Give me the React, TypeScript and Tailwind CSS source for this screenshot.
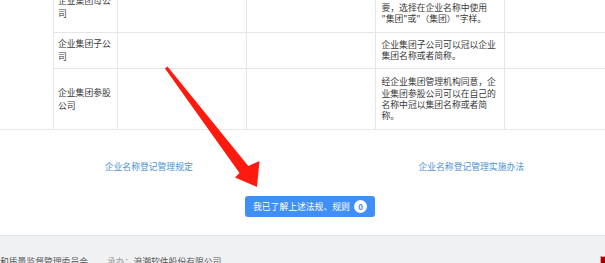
import React from "react";

const cell = "border border-[#e6e6e6] align-middle p-0";

export default function App() {
  return (
    <div className="relative w-[605px] h-[263px] overflow-hidden bg-white" style={{ fontFamily: '"Noto Sans CJK SC", "Noto Sans", sans-serif' }}>
      <div className="w-[645px] -ml-[12.5px] -mt-[18px]">
        <table className="table-fixed border-collapse w-[645px] text-[8.8px] text-[#3a3a3a]">
          <colgroup>
            <col className="w-[65px]" />
            <col className="w-[64px]" />
            <col className="w-[129px]" />
            <col className="w-[129px]" />
            <col className="w-[129px]" />
            <col className="w-[129px]" />
          </colgroup>
          <tbody>
            <tr className="h-[49.5px]">
              <td rowSpan={3} className={cell}></td>
              <td className={cell}>
                <div className="px-[4.5px] leading-[13px] whitespace-nowrap">企业集团母公<br />司</div>
              </td>
              <td className={cell}></td>
              <td className={cell}></td>
              <td className={cell}>
                <div className="px-[6px] leading-[11.5px] whitespace-nowrap">企业集团的母公司可以根据需<br />要，选择在企业名称中使用<br />"集团"或"（集团）"字样。</div>
              </td>
              <td className={cell}></td>
            </tr>
            <tr className="h-[36.5px]">
              <td className={cell}>
                <div className="px-[4.5px] leading-[13px] whitespace-nowrap">企业集团子公<br />司</div>
              </td>
              <td className={cell}></td>
              <td className={cell}></td>
              <td className={cell}>
                <div className="px-[6px] leading-[11.6px] whitespace-nowrap">企业集团子公司可以冠以企业<br />集团名称或者简称。</div>
              </td>
              <td className={cell}></td>
            </tr>
            <tr className="h-[61px]">
              <td className={cell}>
                <div className="px-[4.5px] leading-[13.3px] whitespace-nowrap">企业集团参股<br />公司</div>
              </td>
              <td className={cell}></td>
              <td className={cell}></td>
              <td className={cell}>
                <div className="px-[6px] leading-[11.4px] whitespace-nowrap">经企业集团管理机构同意，企<br />业集团参股公司可以在自己的<br />名称中冠以集团名称或者简<br />称。</div>
              </td>
              <td className={cell}></td>
            </tr>
          </tbody>
        </table>

        <div className="grid grid-cols-2 mt-[31px] text-[8.8px] leading-[12px] text-[#4b92d4]">
          <div className="text-center">企业名称登记管理规定</div>
          <div className="text-center">企业名称登记管理实施办法</div>
        </div>

        <div className="flex justify-center mt-[23px]">
          <button className="h-[21px] w-[130px] flex items-center pl-[8px] pr-[8px] rounded-[3px] bg-[#3f8ff7] text-white text-[8.8px] leading-[12px]">
            <span className="whitespace-nowrap">我已了解上述法规、规则</span>
            <span className="ml-auto w-[13px] h-[13px] rounded-full bg-white text-[#3f8ff7] text-[8px] font-bold flex items-center justify-center leading-none">0</span>
          </button>
        </div>
      </div>

      <div className="mt-[17.5px] border-t border-[#e3e4e6] bg-[#f0f1f3] h-[40px]">
        <div className="flex items-start pt-[20px] w-[625px] text-[8.8px] leading-[12px] text-[#555]">
          <span className="whitespace-nowrap">和质量监督管理委员会</span>
          <span className="whitespace-nowrap ml-[19px]"><span className="text-[#9a9a9a]">承办：</span>浪潮软件股份有限公司</span>
          <div className="ml-auto w-[25px] h-[20px] bg-[#a80000] border-l border-t border-[#e59a9a]" />
        </div>
      </div>

      <svg className="absolute inset-0 pointer-events-none" width="605" height="263" viewBox="0 0 605 263">
        <polygon points="165,68.5 167.5,66.5 248.3,166 259.5,161 257,187 235,177.5 239.5,173" fill="#ff1a10" />
      </svg>
    </div>
  );
}
